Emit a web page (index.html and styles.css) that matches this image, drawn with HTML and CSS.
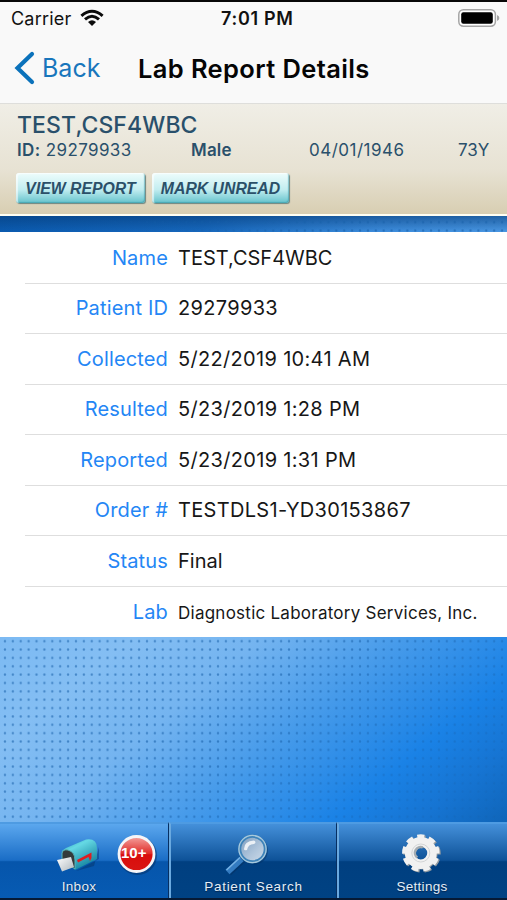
FILE: index.html
```html
<!DOCTYPE html>
<html lang="en">
<head>
<meta charset="utf-8">
<title>Lab Report Details</title>
<link rel="stylesheet" href="styles.css">
</head>
<body>
<div class="phone">
  <div class="status">
    <span class="carrier">Carrier</span>
    <svg class="wifi" width="24" height="18" viewBox="0 0 24 18"><g fill="none" stroke="#0b0b0b" stroke-width="3"><path d="M1.400 6.800Q12 -2.400 22.600 6.800"/><path d="M5 10.400Q12 4.200 19 10.400"/></g><path d="M8 13Q12 9.600 16 13L12 17Z" fill="#0b0b0b"/></svg>
    <span class="clock">7:01 PM</span>
    <svg class="battery" width="42" height="18" viewBox="0 0 42 18"><rect x=".8" y=".8" width="36.6" height="16.4" rx="4.6" fill="#fff" stroke="#a5a5a5" stroke-width="1.5"/><rect x="3.2" y="3.2" width="31.6" height="11.6" rx="2.2" fill="#000"/><path d="M39 6Q41.4 6.8 41.4 9T39 12Z" fill="#a5a5a5"/></svg>
  </div>
  <div class="nav">
    <a class="back"><svg width="21" height="34" viewBox="0 0 21 34"><path d="M18 3L3.500 17L18 31" fill="none" stroke="#0b72bb" stroke-width="4.200" stroke-linecap="round" stroke-linejoin="miter"/></svg><span>Back</span></a>
    <h1>Lab Report Details</h1>
  </div>
  <header class="patient">
    <div class="pname">TEST,CSF4WBC</div>
    <div class="facts">
      <span class="id"><b>ID:</b> 29279933</span><b class="sex">Male</b><span class="dob">04/01/1946</span><span class="age">73Y</span>
    </div>
    <div class="actions"><button class="btn view">VIEW REPORT</button><button class="btn mark">MARK UNREAD</button></div>
  </header>
  <div class="dots strip"></div>
  <dl class="rows">
    <div class="row"><dt>Name</dt><dd class="tight">TEST,CSF4WBC</dd></div>
    <div class="row"><dt>Patient ID</dt><dd>29279933</dd></div>
    <div class="row"><dt>Collected</dt><dd>5/22/2019 10:41 AM</dd></div>
    <div class="row"><dt>Resulted</dt><dd>5/23/2019 1:28 PM</dd></div>
    <div class="row"><dt>Reported</dt><dd>5/23/2019 1:31 PM</dd></div>
    <div class="row"><dt>Order #</dt><dd>TESTDLS1-YD30153867</dd></div>
    <div class="row"><dt>Status</dt><dd class="tight">Final</dd></div>
    <div class="row"><dt>Lab</dt><dd class="small">Diagnostic Laboratory Services, Inc.</dd></div>
  </dl>
  <div class="dots canvas"></div>
  <nav class="tabs">
    <a class="tab active">
      <svg class="icon" viewBox="0 0 168 56" width="168" height="56">
        <defs>
          <linearGradient id="box" x1="0" y1="0" x2=".6" y2="1"><stop offset="0" stop-color="#249bb0"/><stop offset=".35" stop-color="#65d9e4"/><stop offset="1" stop-color="#117f9c"/></linearGradient>
          <linearGradient id="red" x1="0" y1="0" x2="0" y2="1"><stop offset="0" stop-color="#f4a4a0"/><stop offset=".5" stop-color="#df2825"/><stop offset=".52" stop-color="#d90d0c"/><stop offset="1" stop-color="#d91614"/></linearGradient>
          <linearGradient id="mail" x1="0" y1="0" x2="1" y2="1"><stop offset="0" stop-color="#fff"/><stop offset="1" stop-color="#aeb7bd"/></linearGradient>
        </defs>
        <path d="M76 49L99 37V25L94 44Z" fill="#042d59" opacity=".4"/>
        <path d="M62 30Q61 29 66 26L86 17.500Q97 16 97 26V37L75 48Z" fill="url(#box)"/>
        <path d="M62 38V31Q63 27 68 28Q75 30 75 38V47Z" fill="#343b3c" stroke="#56b5bb" stroke-width="1"/>
        <path d="M57 38L71 35L74 45L62 49.500Z" fill="url(#mail)"/>
        <path d="M77 38L91.500 30.500V36L90 39L88.500 35L78 40.500Z" fill="#df1d20"/>
        <circle cx="137.500" cy="33.500" r="19.500" fill="#052c5d" opacity=".45"/>
        <circle cx="136.500" cy="32" r="17.500" fill="url(#red)" stroke="#f5f5f8" stroke-width="2.800"/>
      </svg>
      <span class="badge">10+</span>
      <span class="label">Inbox</span>
    </a>
    <a class="tab">
      <svg class="icon" viewBox="0 0 168 56" width="168" height="56">
        <defs><linearGradient id="lens" x1="0" y1="0" x2="1" y2="1"><stop offset="0" stop-color="#7c9dbf"/><stop offset=".6" stop-color="#b1c6dc"/><stop offset="1" stop-color="#cfdce9"/></linearGradient></defs>
        <g transform="translate(-1 0)">
        <path d="M60 51L74 38" stroke="#062c57" stroke-width="6" opacity=".4"/>
        <path d="M58.500 50L72.500 37" stroke="#337bc1" stroke-width="6"/><path d="M57.500 48L71 35.500" stroke="#77b2e4" stroke-width="1.500"/>
        <circle cx="85" cy="28.500" r="14" fill="#052d5b" opacity=".4"/>
        <circle cx="83.500" cy="27" r="12.800" fill="url(#lens)" stroke="#3e83b9" stroke-width="3.200"/>
        <circle cx="83.500" cy="27" r="13.600" fill="none" stroke="#a8c9dc" stroke-width="1.300"/>
        <path d="M75 27Q75 19 85 18.500Q88 20 85 22Q79 22 78 28Q75 29 75 27Z" fill="#fff" opacity=".8"/>
        </g>
      </svg>
      <span class="label wide">Patient Search</span>
    </a>
    <a class="tab">
      <svg class="icon" viewBox="0 0 168 56" width="168" height="56">
        <g fill="none" stroke="#959ca1" transform="translate(83 32)"><circle r="11" stroke-width="9"/><circle r="16" stroke-width="5.500" pathLength="90" stroke-dasharray="6 4" transform="rotate(-102)"/></g>
        <g fill="none" stroke="#f1f1f1" transform="translate(81.800 31)"><circle r="11.200" stroke-width="9.500"/><circle r="16" stroke-width="5.500" pathLength="90" stroke-dasharray="6 4" transform="rotate(-102)"/><circle r="9" stroke="#d3d5d6" stroke-width="1"/><path d="M-3.500 4.500A5.800 5.800 0 0 1 2-5.600" stroke="#a5acb1" stroke-width="2.500"/></g>
      </svg>
      <span class="label set">Settings</span>
    </a>
  </nav>
</div>
</body>
</html>
```

FILE: styles.css
```css
* { box-sizing: border-box; }
body { margin: 0; font-family: Inter, "Liberation Sans", sans-serif; }
.phone { width: 507px; height: 900px; display: flex; flex-direction: column; overflow: hidden; border-top: 2px solid #080808; background: #f9f9f9; white-space: nowrap; }
.status { height: 34px; display: grid; grid-template-columns: 69px 141px 237px 1fr; align-items: center; padding: 0 0 2px 11px; color: #111; }
.carrier { font-size: 18px; letter-spacing: .2px; }
.clock { font-size: 18px; font-weight: 600; letter-spacing: .7px; }
.wifi, .battery { display: block; }
.nav { height: 67px; display: flex; align-items: center; padding: 0 0 3px 14px; }
.back { display: flex; align-items: center; width: 124px; gap: 7px; color: #1876bc; font-size: 25px; }
.nav h1 { margin: 0; font-size: 25.5px; font-weight: 600; letter-spacing: .38px; color: #050505; }
.patient { height: 113px; padding: 9px 16px 0 17px; color: #2a506b; border-top: 1px solid #dededb; border-bottom: 2px solid #fffef2; background: linear-gradient(#f0eee6, #e7e2d3 60%, #d8ceb2); }
.pname { font-size: 23px; font-weight: 500; line-height: 25px; letter-spacing: .1px; }
.facts { display: grid; grid-template-columns: 174px 118px 149px 1fr; font-size: 17px; line-height: 24px; }
.facts b { font-weight: 600; }
.id { letter-spacing: .38px; }
.sex { letter-spacing: .2px; }
.dob { letter-spacing: .5px; }
.actions { display: flex; gap: 7px; margin: 11px 0 0 -1px; }
.btn { height: 30px; border: 0; border-radius: 3px; padding: 2px 0 0; font: italic bold 15.8px "Liberation Sans", Arial, sans-serif; color: #2b5069; background: linear-gradient(#eefdfc, #c2edf0 55%, #65c3cc); box-shadow: inset 2px 1px 1px #fff9, inset -1px -1px 1px #268a9a77, 1px 1px 1px #6d8580; }
.view { width: 129px; }
.mark { width: 137px; }
.dots { position: relative; }
.dots::after { content: ""; position: absolute; inset: 0; background: radial-gradient(circle, #1860a8 0, #1860a8aa .9px, transparent 1.6px) 1px 0 / 7.9px 8.36px; opacity: .72; }
.strip { height: 16px; background: linear-gradient(#053c7999, transparent), linear-gradient(90deg, #0b5bb0, #1768bd 40%, #3d8ddd 75%, #4a98e4); }
.strip::after { background-position: 1px 2px; -webkit-mask: linear-gradient(90deg, transparent 15%, #000 60%); mask: linear-gradient(90deg, transparent 15%, #000 60%); }
.rows { margin: 0; height: 405px; padding-top: 1px; background: #fff; display: grid; grid-template-rows: repeat(8, 1fr); }
.row { margin-left: 25px; display: grid; grid-template-columns: 143px 1fr; column-gap: 10px; align-items: center; border-bottom: 1px solid #dedede; font-size: 20px; }
.row:last-child { border: 0; }
.row dt { text-align: right; color: #2486f5; letter-spacing: .15px; }
.row dd { margin: 0; color: #171717; letter-spacing: .32px; }
.row .tight { letter-spacing: 0; }
.row .small { font-size: 17px; padding-top: 2px; letter-spacing: .25px; }
.canvas { flex: 1; background: linear-gradient(141deg, #7cbaf3 0%, #84bef3 18%, #74b4f0 36%, #479bea 55%, #1a82e6 76%, #1674d2 88%, #0f65b9 100%); }
.canvas::after { -webkit-mask: linear-gradient(141deg, #000 50%, #0006 90%); mask: linear-gradient(141deg, #000 50%, #0006 90%); }
.tabs { height: 78px; display: grid; grid-template-columns: 169px 168px 170px; border-bottom: 2px solid #061a35; }
.tab { position: relative; display: flex; flex-direction: column; align-items: center; border-top: 2px solid #4e9be2; border-left: 2px solid #6aa9df; border-right: 1px solid #062f62; color: #e3edf7; background: linear-gradient(#4490da, #0e5298 49%, #003f80 51%, #004283); }
.tab:last-child { border-right: 0; }
.tab.active { border-left: 0; background: linear-gradient(#5ba7ee, #1a6dc6 49%, #0655ab 51%, #075bb3); }
.icon { display: block; margin-top: -2px; }
.label { font: 13.5px/18px "Liberation Sans", Arial, sans-serif; letter-spacing: .3px; text-shadow: 0 1px 1px #00254f; }
.wide { letter-spacing: .7px; }
.set { transform: translateX(-1px); }
.active .label { transform: translateX(-5px); }
.badge { position: absolute; left: 121px; top: 20px; font: bold 15px/17px "Liberation Sans", Arial, sans-serif; color: #fff; }
```
